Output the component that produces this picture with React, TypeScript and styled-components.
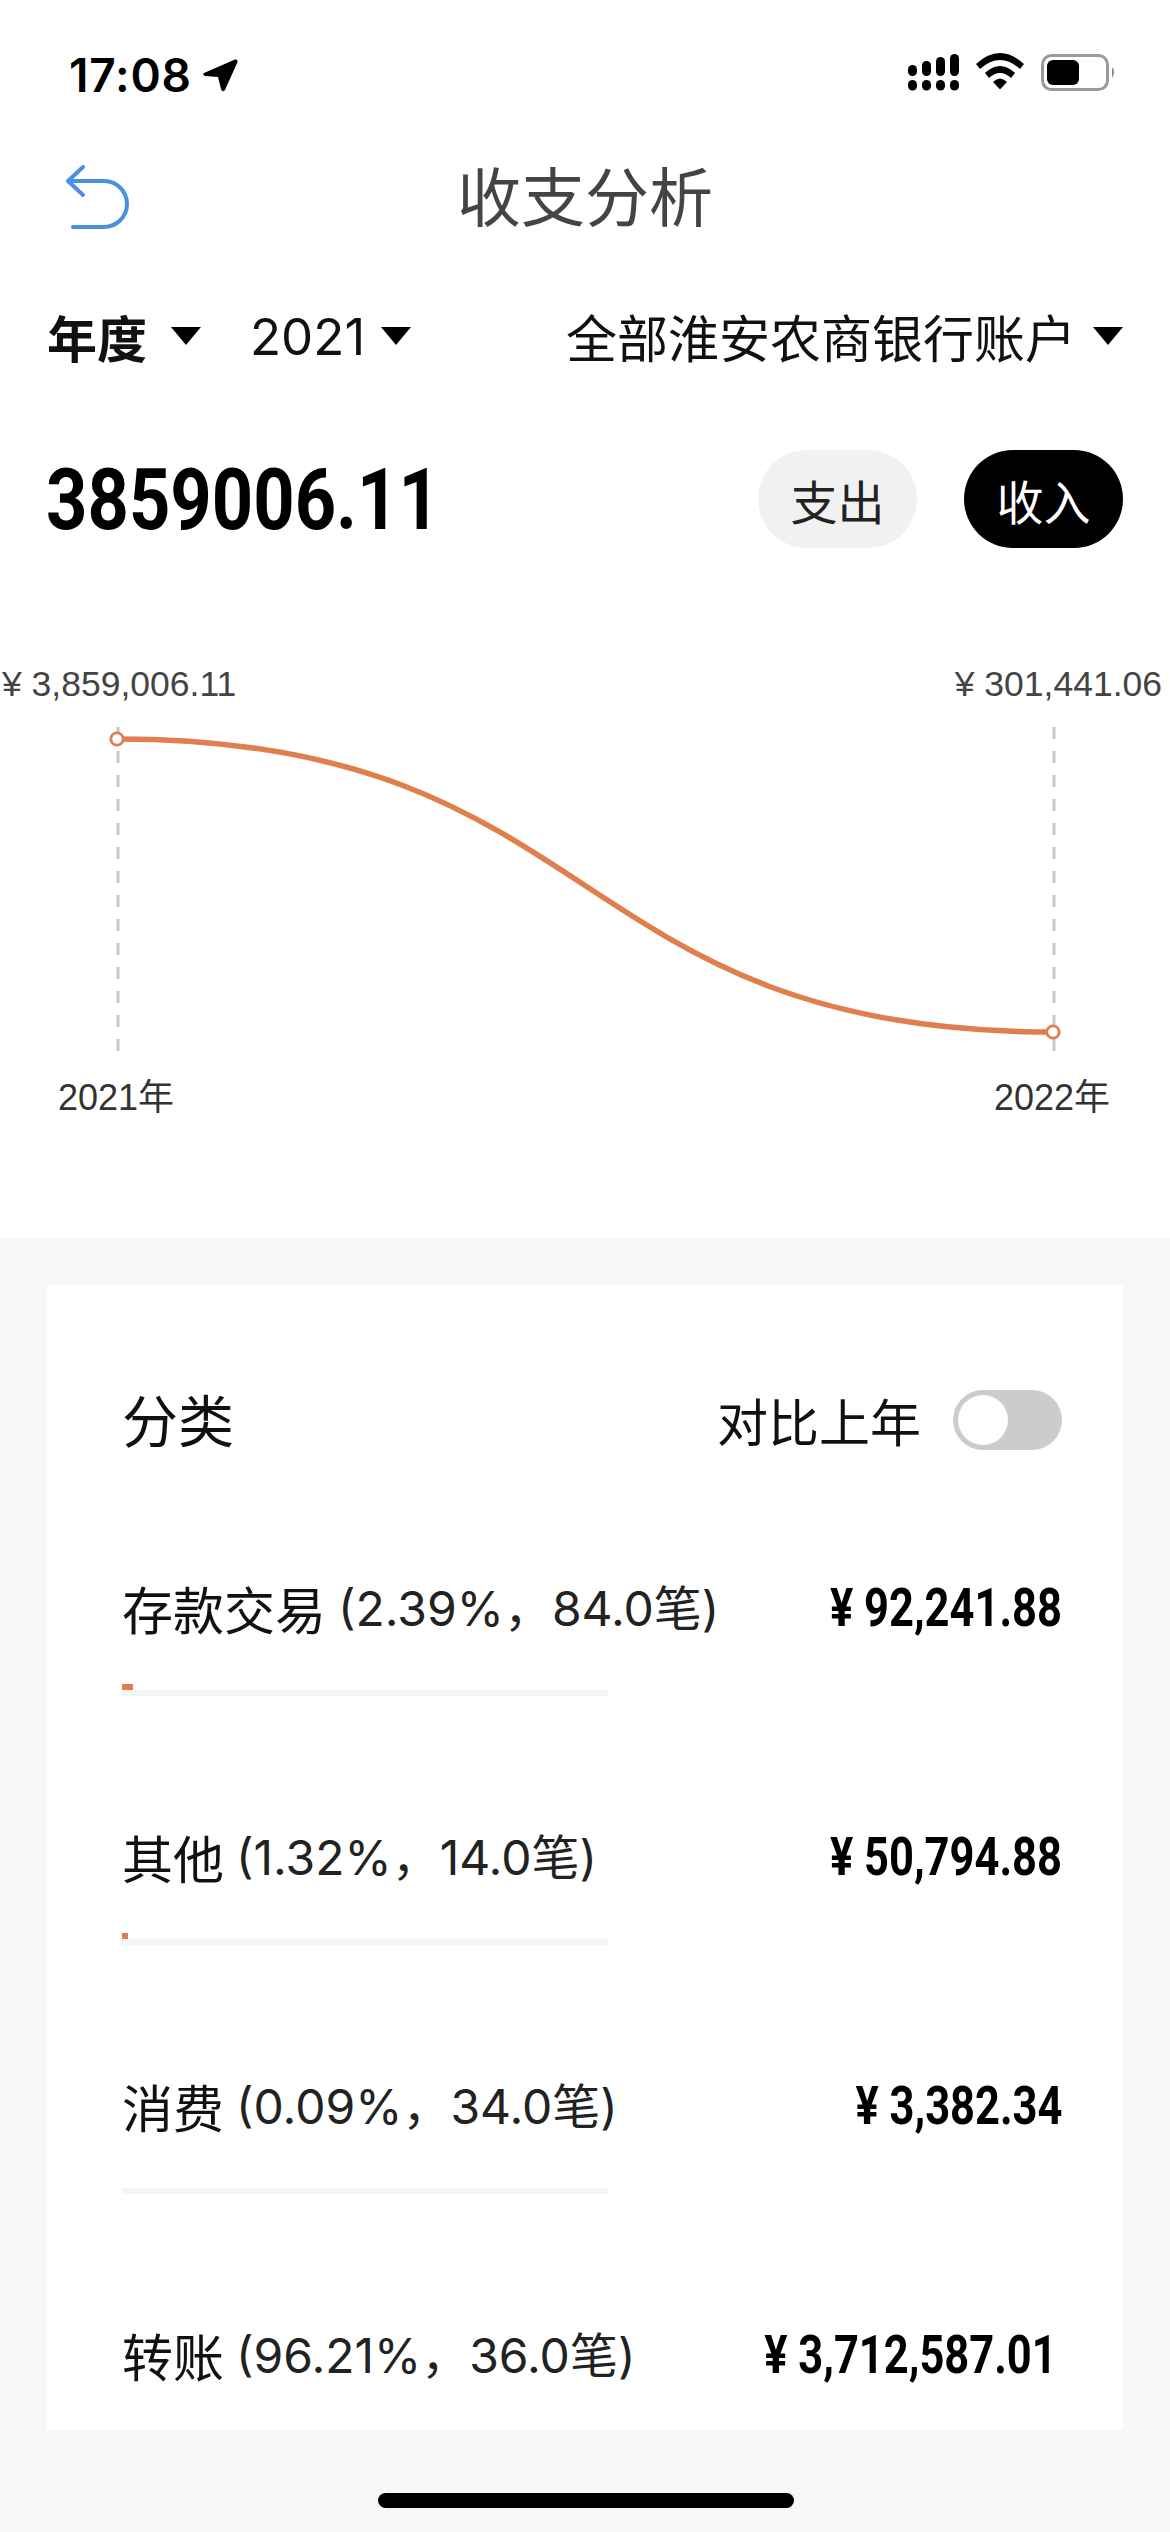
import React from "react";
import styled, { createGlobalStyle } from "styled-components";

const Global = createGlobalStyle`
  html, body { margin: 0; padding: 0; background: #fff; }
  * { box-sizing: border-box; }
`;

const CJK = `"Inter", "Noto Sans CJK SC", sans-serif`;
const NUM = `"Roboto", "Noto Sans CJK SC", sans-serif`;
const CHART = `"Liberation Sans", "Noto Sans CJK SC", sans-serif`;

const Page = styled.div`
  position: relative;
  width: 1170px;
  height: 2532px;
  overflow: hidden;
  background: #fff;
  font-family: ${CJK};
  display: flex;
  flex-direction: column;
`;

const StatusBar = styled.div`
  height: 100px;
  flex: none;
  padding: 48px 53px 0 69px;
  display: flex;
  justify-content: space-between;
  align-items: flex-start;
`;
const Clock = styled.div`
  display: flex;
  align-items: center;
  gap: 10px;
  font-size: 46px;
  line-height: 54px;
  font-weight: 600;
  color: #000;
  letter-spacing: 0.8px;
`;
const NavBar = styled.div`
  height: 196px;
  flex: none;
  position: relative;
  display: flex;
  align-items: center;
  justify-content: center;
`;
const BackIcon = styled.svg`
  position: absolute;
  left: 66px;
  top: 65px;
`;
const Title = styled.div`
  font-size: 64px;
  line-height: 80px;
  color: #444;
`;
const Filters = styled.div`
  height: 80px;
  flex: none;
  padding: 0 47px;
  display: flex;
  align-items: center;
`;
const Filter = styled.div<{ $bold?: boolean; $gap: number; $size: number; $left?: string }>`
  display: flex;
  align-items: center;
  gap: ${(p) => p.$gap}px;
  font-size: ${(p) => p.$size}px;
  font-weight: ${(p) => (p.$bold ? 700 : 400)};
  color: #111;
  margin-left: ${(p) => p.$left ?? "0"};
`;
const Caret = styled.span`
  width: 0;
  height: 0;
  border-left: 15px solid transparent;
  border-right: 15px solid transparent;
  border-top: 18px solid #000;
  flex: none;
`;
const Summary = styled.div`
  height: 98px;
  flex: none;
  margin-top: 74px;
  padding: 0 47px 0 46px;
  display: flex;
  align-items: center;
`;
const Total = styled.div`
  font-family: ${NUM};
  font-size: 86px;
  font-weight: 700;
  color: #000;
  margin-right: auto;
  transform: scaleX(0.84);
  transform-origin: left center;
`;
const Pill = styled.div<{ $active?: boolean }>`
  width: 159px;
  height: 98px;
  border-radius: 49px;
  margin-left: 47px;
  display: flex;
  align-items: center;
  justify-content: center;
  font-size: 47px;
  background: ${(p) => (p.$active ? "#000" : "#f1f1f1")};
  color: ${(p) => (p.$active ? "#fff" : "#222")};
`;
const Chart = styled.svg`
  display: block;
  flex: none;
  margin-top: 96px;
  font-family: ${CHART};
`;
const Lower = styled.div`
  flex: 1;
  background: #f7f7f7;
  padding: 47px 47px 0;
`;
const Card = styled.div`
  background: #fff;
  height: 1145px;
  padding: 0 61px 0 75px;
  overflow: hidden;
`;
const CardHead = styled.div`
  height: 90px;
  margin-top: 90px;
  display: flex;
  align-items: center;
  justify-content: space-between;
`;
const CardTitle = styled.div`
  font-size: 56px;
  color: #111;
  margin-bottom: 5px;
`;
const Compare = styled.div`
  display: flex;
  align-items: center;
  gap: 32px;
  font-size: 51px;
  color: #111;
`;
const Switch = styled.div`
  width: 109px;
  height: 60px;
  border-radius: 30px;
  background: #ccc;
  padding: 5px;
`;
const Knob = styled.div`
  width: 50px;
  height: 50px;
  border-radius: 50%;
  background: #fff;
`;
const Row = styled.div`
  height: 249px;
  flex: none;
  display: flex;
  flex-direction: column;
`;
const RowList = styled.div`
  margin-top: 108px;
  display: flex;
  flex-direction: column;
`;
const RowTop = styled.div<{ $inset?: number }>`
  height: 70px;
  display: flex;
  align-items: center;
  justify-content: space-between;
  padding-right: ${(p) => p.$inset ?? 0}px;
`;
const RowLabel = styled.div`
  display: flex;
  align-items: baseline;
  font-size: 51px;
  color: #111;
  white-space: nowrap;
`;
const RowMeta = styled.span`
  font-size: 48px;
  color: #222;
  position: relative;
  top: -4px;
  margin-left: 12px;
`;
const RowAmount = styled.div`
  font-family: ${NUM};
  font-size: 53px;
  font-weight: 700;
  color: #000;
  white-space: nowrap;
  transform: scaleX(0.82);
  transform-origin: right center;
`;
const Track = styled.div`
  width: 486px;
  height: 6px;
  margin-top: 47px;
  background: #f5f5f5;
  position: relative;
`;
const Fill = styled.div`
  position: absolute;
  left: 0;
  bottom: 6px;
  height: 6px;
  background: #de7f4d;
`;
const HomeBar = styled.div`
  position: absolute;
  left: 378px;
  bottom: 24px;
  width: 416px;
  height: 15px;
  border-radius: 8px;
  background: #000;
`;

const rows = [
  { name: "存款交易", meta: "(2.39%，84.0笔)", amount: "¥ 92,241.88", fill: 11 },
  { name: "其他", meta: "(1.32%，14.0笔)", amount: "¥ 50,794.88", fill: 6 },
  { name: "消费", meta: "(0.09%，34.0笔)", amount: "¥ 3,382.34", fill: 0 },
  { name: "转账", meta: "(96.21%，36.0笔)", amount: "¥ 3,712,587.01", fill: 0, inset: 5, noBar: true },
];

export default function App() {
  return (
    <Page>
      <Global />
      <StatusBar>
        <Clock>
          17:08
          <svg width="37" height="35" viewBox="0 0 37 35">
            <path d="M2 15 L33 1.5 Q36 1 35.5 4 L23 32 Q20.5 35 19 31 L16 19 L3 18 Q0 16.5 2 15 Z" fill="#000" />
          </svg>
        </Clock>
        <svg width="210" height="48" viewBox="906 50 210 48">
          <rect x="907" y="67" width="9" height="11" rx="4.5" fill="#000" />
          <rect x="921" y="63" width="9" height="15" rx="4.5" fill="#000" />
          <rect x="935" y="59" width="9" height="19" rx="4.5" fill="#000" />
          <rect x="949" y="56" width="9" height="22" rx="4.5" fill="#000" />
          <rect x="907" y="82" width="9" height="10.5" rx="4.5" fill="#000" />
          <rect x="921" y="82" width="9" height="10.5" rx="4.5" fill="#000" />
          <rect x="935" y="82" width="9" height="10.5" rx="4.5" fill="#000" />
          <rect x="949" y="82" width="9" height="10.5" rx="4.5" fill="#000" />
          <path d="M975 66 Q999 44 1023 66 L1019 71 Q999 53 979 71 Z" fill="#000" />
          <path d="M984 75 Q999 61 1014 75 L1010 80 Q999 70 988 80 Z" fill="#000" />
          <path d="M992 84 Q999 77 1006 84 L999 91.5 Z" fill="#000" />
          <rect x="1041.5" y="57.5" width="65" height="34" rx="9" fill="none" stroke="#999" strokeWidth="3" />
          <rect x="1046" y="62" width="32" height="25" rx="6" fill="#000" />
          <path d="M1111 69 Q1115 74 1111 80 Z" fill="#888" />
        </svg>
      </StatusBar>
      <NavBar>
        <BackIcon width="64" height="66" viewBox="0 0 64 66">
          <path d="M2 16 H38 A23 23 0 0 1 38 62 H7 M17 2 L2 16 L17 30" fill="none" stroke="#4a90e2" strokeWidth="4" strokeLinecap="round" strokeLinejoin="round" />
        </BackIcon>
        <Title>收支分析</Title>
      </NavBar>
      <Filters>
        <Filter $bold $gap={24} $size={50}>
          年度
          <Caret />
        </Filter>
        <Filter $gap={16} $size={51} $left="49px">
          2021
          <Caret />
        </Filter>
        <Filter $gap={17} $size={51} $left="auto">
          全部淮安农商银行账户
          <Caret />
        </Filter>
      </Filters>
      <Summary>
        <Total>3859006.11</Total>
        <Pill>支出</Pill>
        <Pill $active>收入</Pill>
      </Summary>
      <Chart width="1170" height="594" viewBox="0 644 1170 594">
        <text x="2" y="696" fontSize="35.5" fill="#444">¥ 3,859,006.11</text>
        <text x="1162" y="696" fontSize="35.5" fill="#444" textAnchor="end">¥ 301,441.06</text>
        <line x1="118" y1="727" x2="118" y2="1051" stroke="#c8c8c8" strokeWidth="3" strokeDasharray="12 12" />
        <line x1="1054" y1="727" x2="1054" y2="1051" stroke="#c8c8c8" strokeWidth="3" strokeDasharray="12 12" />
        <path d="M117 739 C 607 739, 563 1032, 1053 1032" fill="none" stroke="#de7f4d" strokeWidth="5.5" />
        <circle cx="117" cy="739" r="6.2" fill="#fff" stroke="#de7f4d" strokeWidth="2.8" />
        <circle cx="1053" cy="1032" r="6.2" fill="#fff" stroke="#de7f4d" strokeWidth="2.8" />
        <text x="116" y="1110" fontSize="36" fill="#333" textAnchor="middle">2021年</text>
        <text x="1052" y="1110" fontSize="36" fill="#333" textAnchor="middle">2022年</text>
      </Chart>
      <Lower>
        <Card>
          <CardHead>
            <CardTitle>分类</CardTitle>
            <Compare>
              对比上年
              <Switch>
                <Knob />
              </Switch>
            </Compare>
          </CardHead>
          <RowList>
            {rows.map((r) => (
              <Row key={r.name}>
                <RowTop $inset={r.inset}>
                  <RowLabel>
                    {r.name}
                    <RowMeta>{r.meta}</RowMeta>
                  </RowLabel>
                  <RowAmount>{r.amount}</RowAmount>
                </RowTop>
                {!r.noBar && (
                  <Track>
                    {r.fill > 0 && <Fill style={{ width: r.fill }} />}
                  </Track>
                )}
              </Row>
            ))}
          </RowList>
        </Card>
      </Lower>
      <HomeBar />
    </Page>
  );
}
